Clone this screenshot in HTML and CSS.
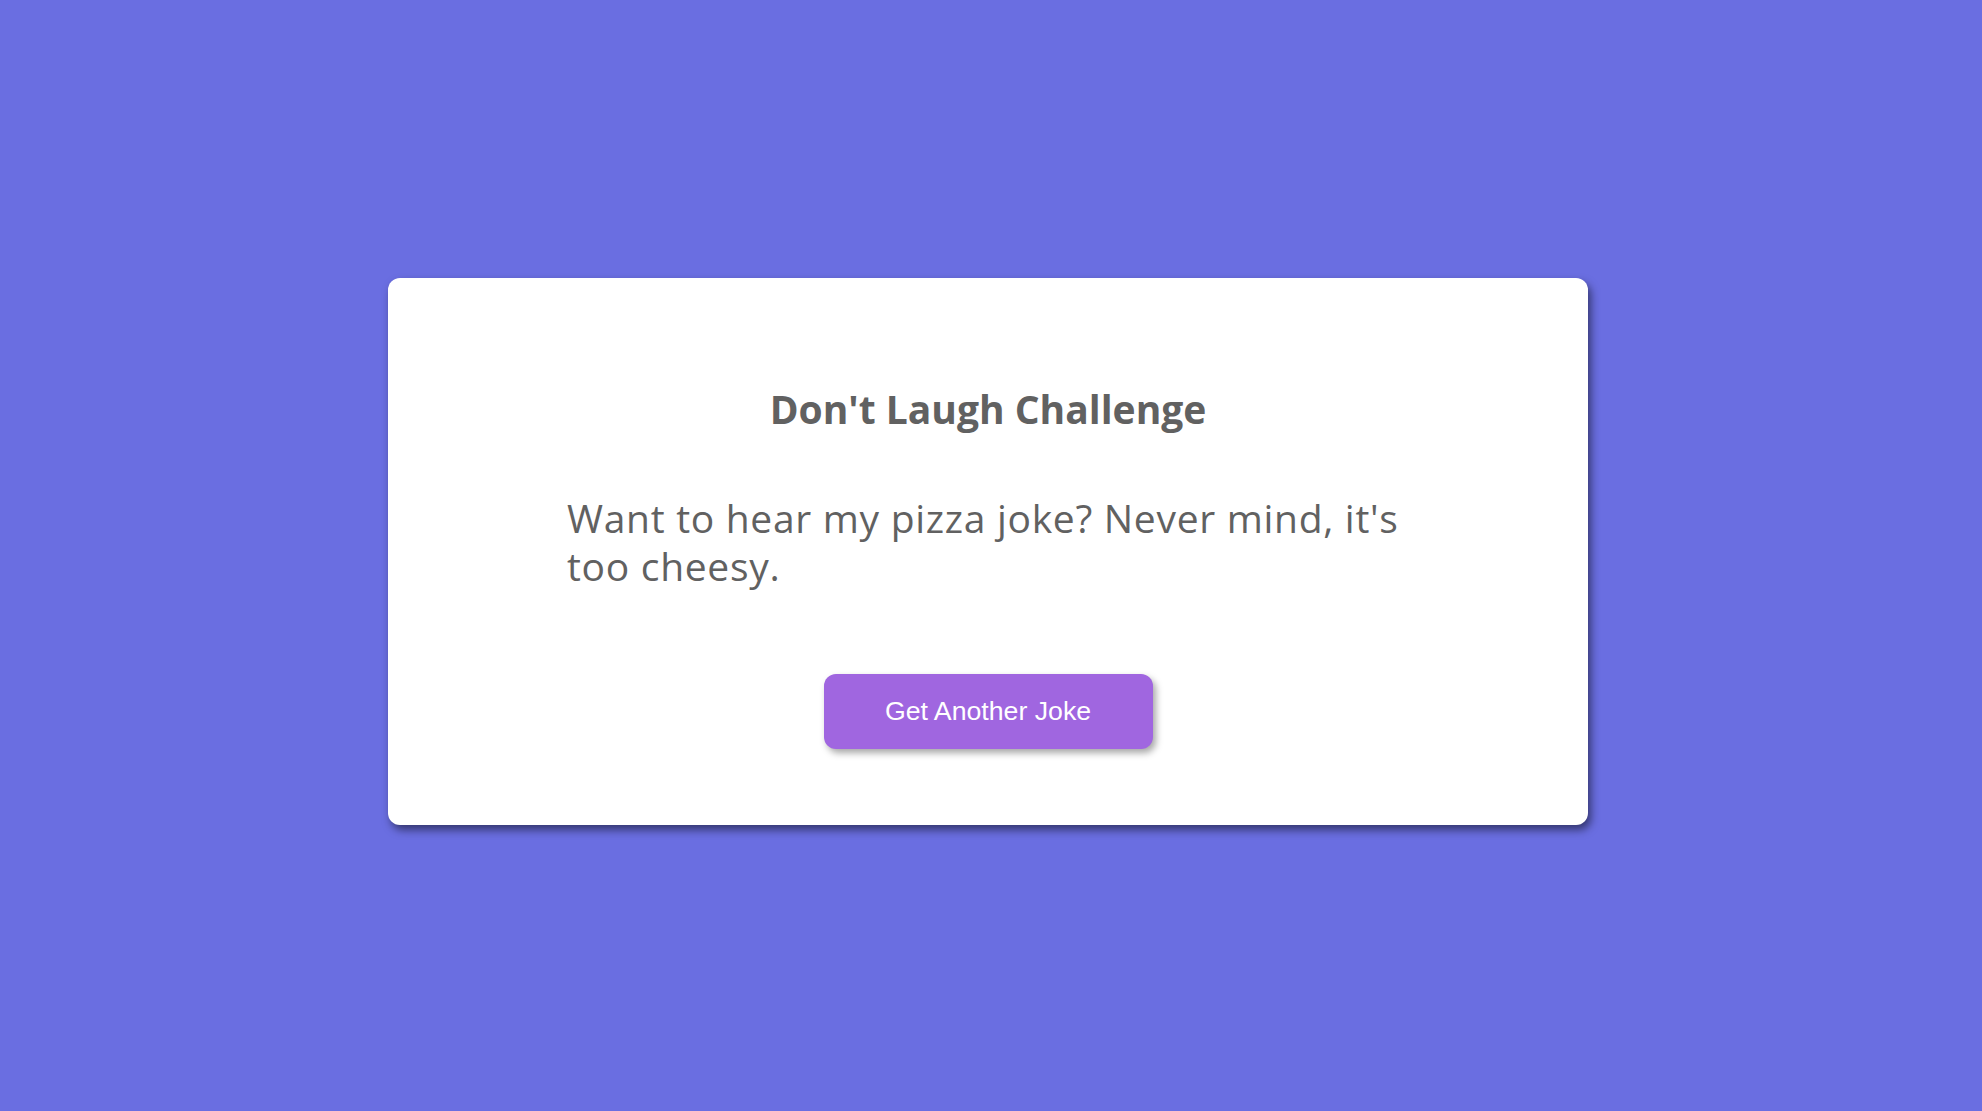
FILE: index.html
```html
<!DOCTYPE html>
<html lang="en">
<head>
<meta charset="utf-8">
<title>Don't Laugh Challenge</title>
<link rel="stylesheet" href="styles.css">
</head>
<body>
  <main class="card">
    <h1 class="title">Don't Laugh Challenge</h1>
    <p class="joke">Want to hear my pizza joke? Never mind, it's too cheesy.</p>
    <button class="btn" type="button">Get Another Joke</button>
  </main>
</body>
</html>
```
FILE: styles.css
```css
html, body {
  margin: 0;
  height: 100%;
}
body {
  background: #6a6ee1;
  display: flex;
  align-items: center;
  justify-content: center;
  padding: 0 6px 8px 0;
  box-sizing: border-box;
  font-family: "Open Sans", "Noto Sans", sans-serif;
}
.card {
  width: 1200px;
  height: 547px;
  box-sizing: border-box;
  background: #fff;
  border-radius: 12px;
  box-shadow: 3px 5px 8px rgba(0, 0, 0, 0.5);
  padding: 107px 0 0;
  display: flex;
  flex-direction: column;
  align-items: center;
}
.title {
  margin: 0;
  font-size: 39px;
  line-height: 48px;
  font-weight: 700;
  color: #616161;
  text-align: center;
}
.joke {
  margin: 61px 0 0;
  width: 842px;
  font-size: 39px;
  line-height: 48px;
  letter-spacing: 0.7px;
  color: #616161;
  text-align: left;
}
.btn {
  margin-top: 84px;
  width: 329px;
  height: 75px;
  border: none;
  border-radius: 12px;
  background: #a066e0;
  color: #fff;
  font-family: "Liberation Sans", Arial, sans-serif;
  font-size: 26.7px;
  box-shadow: 3px 4px 7px rgba(0, 0, 0, 0.35);
  cursor: pointer;
}
```
